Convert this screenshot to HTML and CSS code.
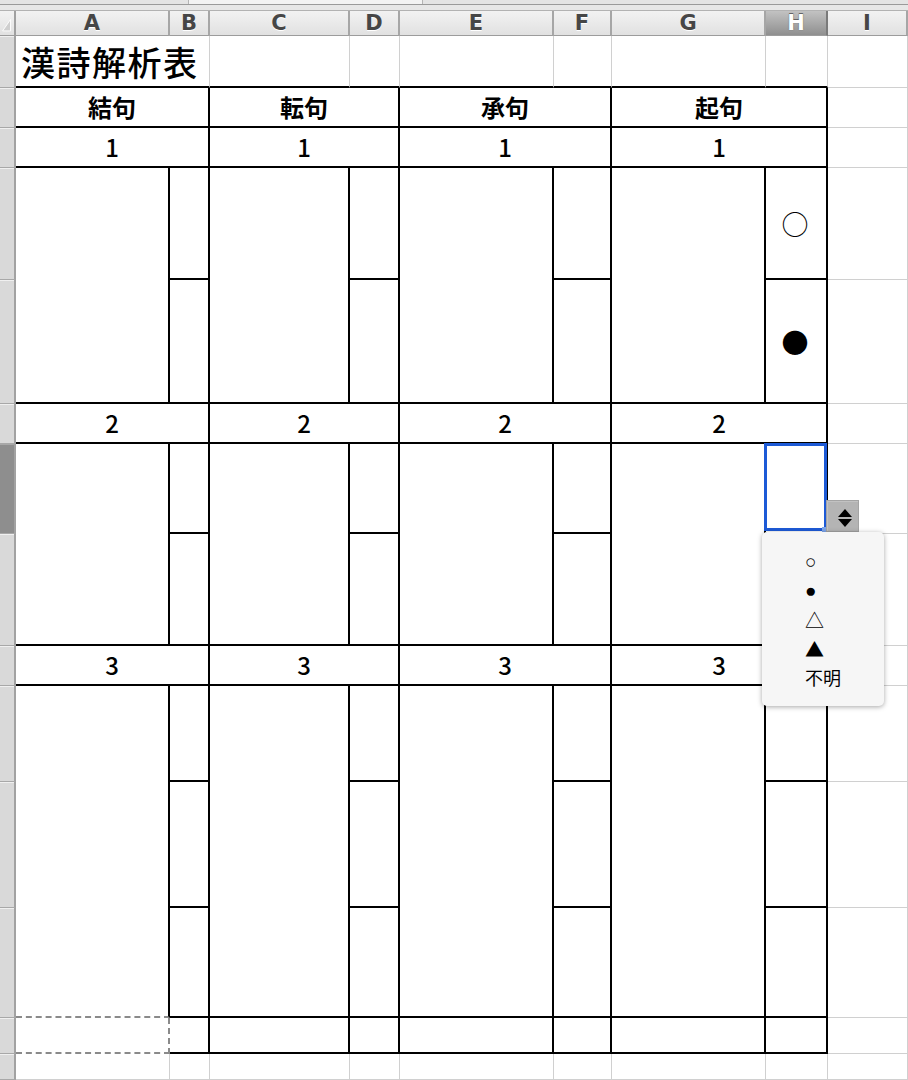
FILE: index.html
```html
<!DOCTYPE html>
<html lang="ja">
<head>
<meta charset="utf-8">
<title>漢詩解析表</title>
<link rel="stylesheet" href="styles.css">
</head>
<body>
<div class="topbar">
  <div class="tb-top"><div class="tb-space"></div><div class="tb-ctl"></div></div>
</div>
<div class="sheet">
  <!-- column header -->
  <div class="ch corner"><svg width="16" height="24" viewBox="0 0 16 24"><polygon points="3,21 12,21 12,8" fill="#cfcfcf" stroke="#ffffff" stroke-width="1"/></svg></div>
  <div class="ch">A</div><div class="ch">B</div><div class="ch">C</div><div class="ch">D</div>
  <div class="ch">E</div><div class="ch">F</div><div class="ch">G</div><div class="ch sel">H</div><div class="ch">I</div>

  <!-- row 1: title -->
  <div class="rh"></div>
  <div class="cell kb c2 title">漢詩解析表</div>
  <div class="cell kb"></div><div class="cell kb"></div><div class="cell kb"></div><div class="cell kb"></div><div class="cell kb"></div><div class="cell kb"></div>
  <div class="cell"></div>

  <!-- row 2: headers -->
  <div class="rh"></div>
  <div class="cell k c2 hd">結句</div>
  <div class="cell k c2 hd">転句</div>
  <div class="cell k c2 hd">承句</div>
  <div class="cell k c2 hd">起句</div>
  <div class="cell"></div>

  <!-- row 3: 1 -->
  <div class="rh"></div>
  <div class="cell k c2 num">1</div>
  <div class="cell k c2 num">1</div>
  <div class="cell k c2 num">1</div>
  <div class="cell k c2 num">1</div>
  <div class="cell"></div>

  <!-- rows 4-5 -->
  <div class="rh"></div>
  <div class="cell k r2"></div><div class="cell k"></div>
  <div class="cell k r2"></div><div class="cell k"></div>
  <div class="cell k r2"></div><div class="cell k"></div>
  <div class="cell k r2"></div><div class="cell k mark">○</div>
  <div class="cell"></div>
  <div class="rh"></div>
  <div class="cell k"></div><div class="cell k"></div><div class="cell k"></div><div class="cell k mark">●</div>
  <div class="cell"></div>

  <!-- row 6: 2 -->
  <div class="rh"></div>
  <div class="cell k c2 num">2</div>
  <div class="cell k c2 num">2</div>
  <div class="cell k c2 num">2</div>
  <div class="cell k c2 num">2</div>
  <div class="cell"></div>

  <!-- rows 7-8 -->
  <div class="rh selrow"></div>
  <div class="cell k r2"></div><div class="cell k"></div>
  <div class="cell k r2"></div><div class="cell k"></div>
  <div class="cell k r2"></div><div class="cell k"></div>
  <div class="cell k r2"></div>
  <div class="cell k active">
    <div class="selbox"></div>
    <div class="handle"></div>
    <div class="ddbtn"><svg width="31" height="30" viewBox="0 0 31 30"><polygon points="11,16 18,8 25,16" fill="#000"/><polygon points="11,18 18,26 25,18" fill="#000"/></svg></div>
    <ul class="ddlist">
      <li>○</li>
      <li>●</li>
      <li class="tri">△</li>
      <li class="tri">▲</li>
      <li class="jp">不明</li>
    </ul>
  </div>
  <div class="cell"></div>
  <div class="rh"></div>
  <div class="cell k"></div><div class="cell k"></div><div class="cell k"></div><div class="cell k"></div>
  <div class="cell"></div>

  <!-- row 9: 3 -->
  <div class="rh"></div>
  <div class="cell k c2 num">3</div>
  <div class="cell k c2 num">3</div>
  <div class="cell k c2 num">3</div>
  <div class="cell k c2 num">3</div>
  <div class="cell"></div>

  <!-- rows 10-12 -->
  <div class="rh"></div>
  <div class="cell kr r3 dashb"></div><div class="cell k"></div>
  <div class="cell k r3"></div><div class="cell k"></div>
  <div class="cell k r3"></div><div class="cell k"></div>
  <div class="cell k r3"></div><div class="cell k"></div>
  <div class="cell"></div>
  <div class="rh"></div>
  <div class="cell k"></div><div class="cell k"></div><div class="cell k"></div><div class="cell k"></div>
  <div class="cell"></div>
  <div class="rh"></div>
  <div class="cell k"></div><div class="cell k"></div><div class="cell k"></div><div class="cell k"></div>
  <div class="cell"></div>

  <!-- row 13 -->
  <div class="rh"></div>
  <div class="cell marq"></div>
  <div class="cell k"></div><div class="cell k"></div><div class="cell k"></div><div class="cell k"></div>
  <div class="cell k"></div><div class="cell k"></div><div class="cell k"></div>
  <div class="cell"></div>

  <!-- row 14 -->
  <div class="rh"></div>
  <div class="cell"></div><div class="cell"></div><div class="cell"></div><div class="cell"></div>
  <div class="cell"></div><div class="cell"></div><div class="cell"></div><div class="cell"></div>
  <div class="cell"></div>
</div>
</body>
</html>
```
FILE: styles.css
```css
* { box-sizing: border-box; }
html, body { margin: 0; padding: 0; }
body {
  width: 908px;
  height: 1080px;
  overflow: hidden;
  background: #ffffff;
  font-family: "Noto Sans CJK JP", "Noto Sans", sans-serif;
}

.topbar {
  height: 11px;
  background: #e7e7e7;
  border-bottom: 1px solid #b2b2b2;
}
.tb-top {
  display: flex;
  height: 5px;
  border-bottom: 1px solid #9a9a9a;
  background: #e4e4e4;
}
.tb-space { width: 188px; }
.tb-ctl {
  width: 235px;
  background: #f3f3f3;
  border-left: 1px solid #b4b4b4;
  border-right: 1px solid #b4b4b4;
}

.sheet {
  display: grid;
  grid-template-columns: 16px 154px 40px 140px 50px 154px 58px 154px 62px 80px;
  grid-template-rows: 25px 52px 40px 40px 112px 124px 40px 90px 112px 40px 96px 126px 110px 36px 26px;
}

.ch {
  background: linear-gradient(#f2f2f2, #e1e1e1);
  border-right: 2px solid #a6a6a6;
  border-bottom: 1px solid #9c9c9c;
  display: flex;
  align-items: center;
  justify-content: center;
  font-family: "DejaVu Sans", sans-serif;
  font-weight: bold;
  font-size: 21px;
  line-height: 1;
  color: #464646;
  text-shadow: 0 1px 0 #ffffff;
  padding-top: 1px;
}
.ch:last-child { border-right: none; }
.ch.corner {
  border-right: 2px solid #a0a0a0;
  align-items: flex-end;
  justify-content: flex-end;
  padding: 0;
}
.ch.corner svg { display: block; }
.ch.sel {
  background: linear-gradient(#c2c2c2, #8f8f8f);
  border-right-color: #7a7a7a;
  color: #ffffff;
  text-shadow: 0 0 1px #555555, 0 -1px 0 #666666;
}

.rh {
  background: #d9d9d9;
  border-right: 2px solid #a2a2a2;
  border-bottom: 1px solid #a8a8a8;
  box-shadow: inset 0 1px 0 #f0f0f0;
}
.rh.selrow { background: #8e8e8e; box-shadow: inset 0 1px 0 #a8a8a8; }

.cell {
  border-right: 1px solid #d0d0d0;
  border-bottom: 1px solid #d0d0d0;
  color: #000000;
}
.k { border-right: 2px solid #000000; border-bottom: 2px solid #000000; }
.kb { border-bottom: 2px solid #000000; }
.kr { border-right: 2px solid #000000; }
.c2 { grid-column: span 2; }
.r2 { grid-row: span 2; }
.r3 { grid-row: span 3; }

.title {
  font-size: 34px;
  font-weight: 500;
  display: flex;
  align-items: center;
  padding-left: 5px;
  letter-spacing: 1.5px;
  white-space: nowrap;
}
.hd, .num {
  display: flex;
  align-items: center;
  justify-content: center;
  font-size: 24px;
  padding-bottom: 2px;
}
.hd { font-weight: bold; }
.num { font-weight: 500; font-size: 24px; }
.mark {
  display: flex;
  align-items: center;
  justify-content: center;
  font-size: 27px;
  line-height: 1;
  padding-right: 2px;
}

.dashb { border-bottom: 2px dashed #8a8a8a; }
.marq {
  border-right: 2px dashed #8a8a8a;
  border-bottom: 2px dashed #8a8a8a;
}

.active { position: relative; }
.selbox {
  position: absolute;
  left: -2px;
  top: -1px;
  width: 63px;
  height: 88px;
  border: 3px solid #1d5ad6;
}
.handle {
  position: absolute;
  left: 56px;
  top: 83px;
  width: 6px;
  height: 5px;
  background: #7ea6ea;
}
.ddbtn {
  position: absolute;
  left: 60px;
  top: 56px;
  width: 33px;
  height: 32px;
  background: #b4b4b4;
  border: 1px solid #a4a4a4;
  box-shadow: inset 1px 1px 0 #c2c2c2;
  z-index: 2;
}
.ddbtn svg { display: block; }
.ddlist {
  position: absolute;
  left: -4px;
  top: 88px;
  width: 122px;
  height: 174px;
  margin: 0;
  padding: 15px 0 0 43px;
  list-style: none;
  background: #f6f6f6;
  border-radius: 5px;
  box-shadow: 0 1px 5px rgba(0, 0, 0, 0.35);
  font-family: "Liberation Sans", "Noto Sans CJK JP", sans-serif;
  font-size: 19px;
  line-height: 29px;
  color: #000000;
  z-index: 3;
}
.ddlist li { height: 29px; white-space: nowrap; }
.ddlist li.tri { font-family: "Noto Sans CJK JP", sans-serif; font-size: 19px; }
.ddlist li.jp { font-family: "Noto Sans CJK JP", sans-serif; font-size: 18px; }
```
